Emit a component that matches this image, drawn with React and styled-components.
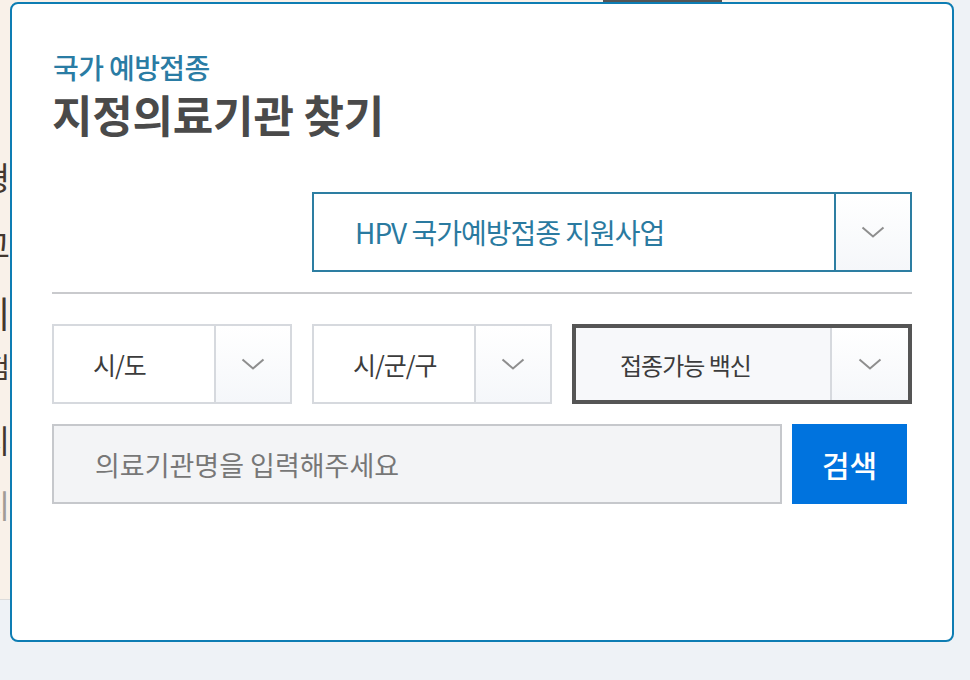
import React from "react";
import styled, { createGlobalStyle } from "styled-components";

const GlobalStyle = createGlobalStyle`
  html, body {
    margin: 0;
    padding: 0;
    background: #eef2f6;
    font-family: "Noto Sans CJK KR", "Noto Sans", sans-serif;
  }
`;

const Screen = styled.div`
  position: relative;
  width: 970px;
  height: 680px;
  overflow: hidden;
  background: #eef2f6;
`;

const BehindPage = styled.div`
  width: 952px;
  height: 599px;
  background: #f9f1e9;
  border-bottom: 1px solid #dcdcdc;
  display: flex;
  flex-direction: column;
`;

const TopTab = styled.div`
  margin-left: 603px;
  width: 119px;
  height: 3px;
  background: #555;
`;

const EdgeText = styled.div`
  width: 10px;
  overflow: hidden;
  display: flex;
  flex-direction: column;
  align-items: flex-end;
  padding-top: 147px;
`;

const EdgeLine = styled.div`
  white-space: nowrap;
  font-size: ${(p) => p.$size || 30}px;
  line-height: ${(p) => p.$lh || 50}px;
  color: ${(p) => (p.$light ? "#a29c96" : "#43372f")};
`;

const Modal = styled.div`
  position: absolute;
  left: 10px;
  top: 2px;
  width: 944px;
  height: 640px;
  box-sizing: border-box;
  background: #fff;
  border: 2px solid #0e7db3;
  border-radius: 8px;
  padding: 48px 40px 0 40px;
`;

const Eyebrow = styled.div`
  font-size: 28px;
  line-height: 30px;
  font-weight: 500;
  letter-spacing: -0.6px;
  color: #2a7ca4;
  margin-left: 1px;
`;

const Title = styled.h2`
  margin: 7px 0 0;
  font-size: 44px;
  line-height: 50px;
  font-weight: 700;
  letter-spacing: -0.2px;
  color: #4a4a4a;
`;

const ProgramRow = styled.div`
  display: flex;
  justify-content: flex-end;
  margin-top: 53px;
`;

const Divider = styled.hr`
  margin: 20px 0 30px;
  border: 0;
  height: 2px;
  background: #c9cacd;
`;

const FilterRow = styled.div`
  display: grid;
  grid-template-columns: 240px 240px 340px;
  gap: 20px;
`;

const SelectBox = styled.div`
  display: flex;
  box-sizing: border-box;
  width: ${(p) => p.$width || "100%"};
  height: 80px;
  background: ${(p) => (p.$variant === "focus" ? "#f7f8fa" : "#fff")};
  border: ${(p) =>
    p.$variant === "primary"
      ? "2px solid #2d7ea2"
      : p.$variant === "focus"
      ? "4px solid #555"
      : "2px solid #d6d9de"};
`;

const SelectLabel = styled.div`
  flex: 1;
  display: flex;
  align-items: center;
  padding-left: ${(p) => p.$pad || 39}px;
  font-size: ${(p) => p.$size || 25}px;
  letter-spacing: ${(p) => p.$ls ?? -1}px;
  color: ${(p) => p.$color || "#3c3c3c"};
`;

const ArrowZone = styled.div`
  width: ${(p) => p.$w || 74}px;
  display: flex;
  align-items: center;
  justify-content: center;
  border-left: 2px solid ${(p) => p.$line || "#d6d9de"};
  background: linear-gradient(180deg, #ffffff 0%, #f5f7fa 100%);
`;

const SearchRow = styled.div`
  display: flex;
  gap: 10px;
  margin-top: 20px;
`;

const SearchInput = styled.input`
  box-sizing: border-box;
  width: 730px;
  height: 80px;
  border: 2px solid #c6c8cc;
  background: #f3f4f6;
  padding: 0 0 0 41px;
  font-family: inherit;
  font-size: 27px;
  letter-spacing: 0;
  outline: none;
  &::placeholder {
    color: #777;
  }
`;

const SearchButton = styled.button`
  width: 115px;
  height: 80px;
  border: 0;
  background: #0073de;
  color: #fff;
  font-family: inherit;
  font-size: 30px;
  font-weight: 500;
  cursor: pointer;
`;

const Chevron = () => (
  <svg width="24" height="12" viewBox="0 0 24 12" fill="none">
    <path d="M1.5 1.5 L12 10.5 L22.5 1.5" stroke="#8e8e8e" strokeWidth="2" />
  </svg>
);

const Select = ({ label, width, variant, labelProps, arrowProps }) => (
  <SelectBox $width={width} $variant={variant}>
    <SelectLabel {...labelProps}>{label}</SelectLabel>
    <ArrowZone {...arrowProps}>
      <Chevron />
    </ArrowZone>
  </SelectBox>
);

export default function App() {
  return (
    <Screen>
      <GlobalStyle />
      <BehindPage>
        <TopTab />
        <EdgeText>
          <EdgeLine $size={32} $lh={52}>형</EdgeLine>
          <EdgeLine $size={32} $lh={84}>고</EdgeLine>
          <EdgeLine $size={36} $lh={52}>티</EdgeLine>
          <EdgeLine $size={28} $lh={56}>험</EdgeLine>
          <EdgeLine $size={32} $lh={90}>지</EdgeLine>
          <EdgeLine $size={32} $lh={40} $light>지</EdgeLine>
        </EdgeText>
      </BehindPage>
      <Modal>
        <Eyebrow>국가 예방접종</Eyebrow>
        <Title>지정의료기관 찾기</Title>
        <ProgramRow>
          <Select
            width="600px"
            variant="primary"
            label="HPV 국가예방접종 지원사업"
            labelProps={{ $size: 28, $ls: -1, $color: "#2a7aa0", $pad: 41 }}
            arrowProps={{ $line: "#2d7ea2", $w: 74 }}
          />
        </ProgramRow>
        <Divider />
        <FilterRow>
          <Select label="시/도" />
          <Select label="시/군/구" />
          <Select
            variant="focus"
            label="접종가능 백신"
            labelProps={{ $pad: 44, $size: 24 }}
            arrowProps={{ $w: 76 }}
          />
        </FilterRow>
        <SearchRow>
          <SearchInput placeholder="의료기관명을 입력해주세요" />
          <SearchButton>검색</SearchButton>
        </SearchRow>
      </Modal>
    </Screen>
  );
}
